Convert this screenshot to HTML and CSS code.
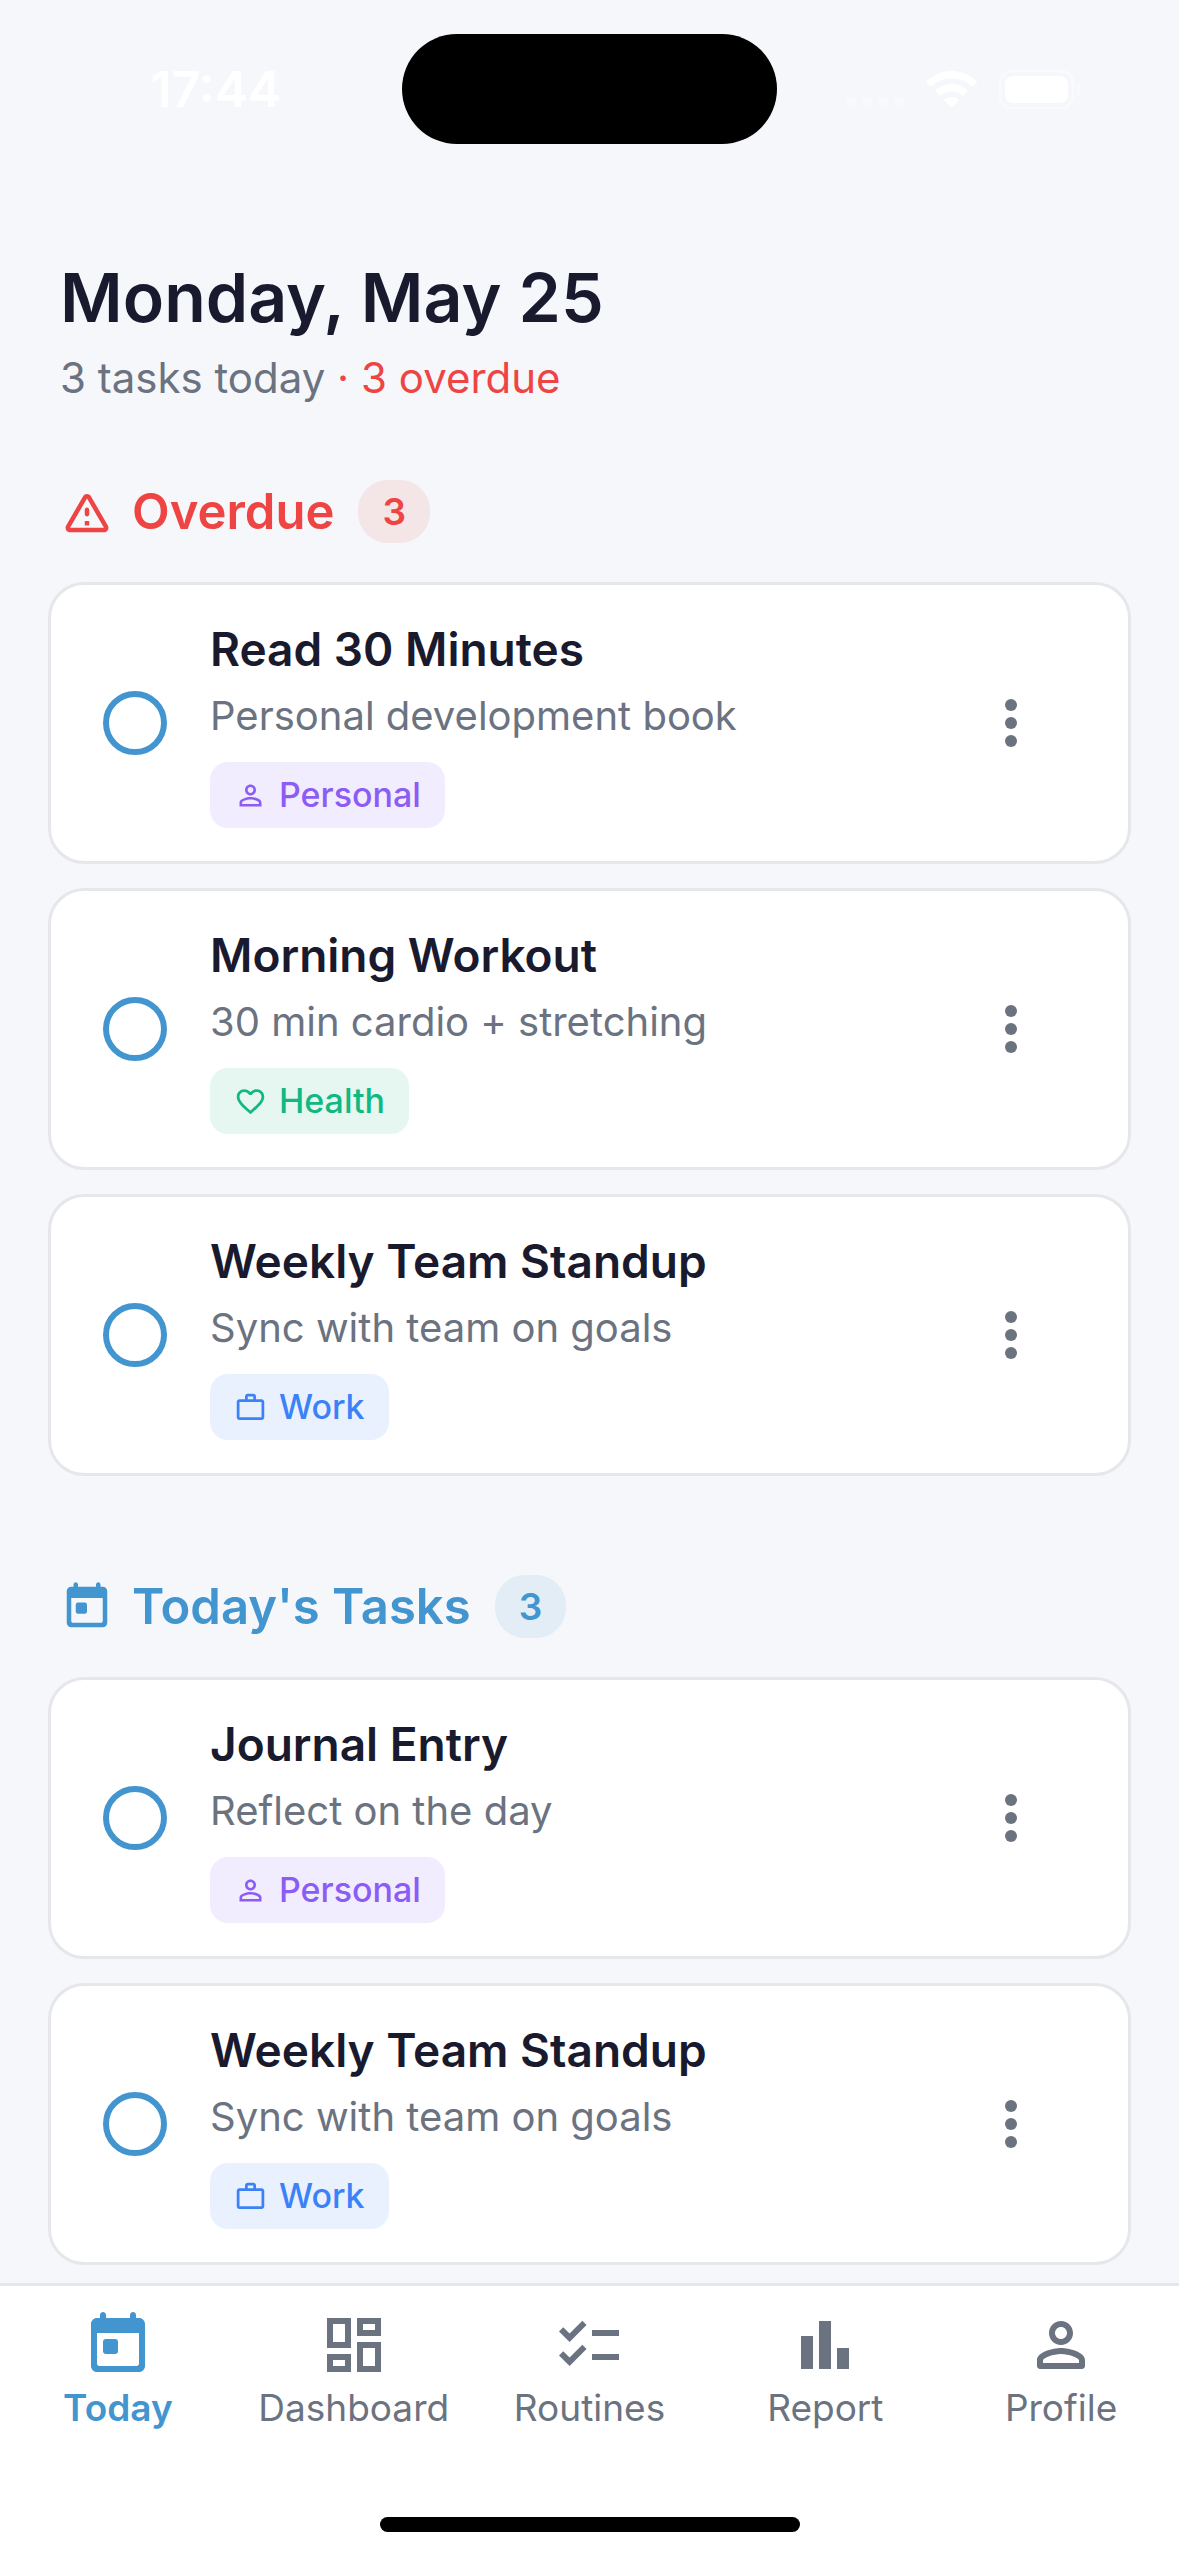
FILE: index.html
```
<!DOCTYPE html>
<html lang="en">
<head>
    <meta charset="UTF-8">
    <meta name="viewport" content="width=device-width, initial-scale=1.0">
    <title>Today</title>
    <link rel="stylesheet" href="styles.css">
</head>
<body>
    <!-- Shared icons -->
    <svg class="sprite" aria-hidden="true">
        <symbol id="icon-today" viewBox="0 0 24 24">
            <path fill-rule="evenodd" d="M19 3h-1V2c0-.55-.45-1-1-1s-1 .45-1 1v1H8V2c0-.55-.45-1-1-1s-1 .45-1 1v1H5c-1.110 0-2 .9-2 2v14c0 1.100.890 2 2 2h14c1.100 0 2-.9 2-2V5c0-1.100-.9-2-2-2zM5 8h14v10.200c0 .440-.360.800-.800.800H5.800c-.440 0-.800-.360-.800-.800V8z"/>
            <rect x="7" y="10" width="5" height="5" rx="1"/>
        </symbol>
        <symbol id="icon-warning" viewBox="0 0 24 24">
            <path d="M12 5.990L19.530 19H4.470L12 5.990M2.740 18c-.77 1.330.19 3 1.730 3h15.060c1.540 0 2.500-1.670 1.730-3L13.730 4.990c-.77-1.330-2.690-1.330-3.460 0L2.740 18zM11 11v2c0 .550.450 1 1 1s1-.450 1-1v-2c0-.550-.450-1-1-1s-1 .450-1 1zm0 5h2v2h-2z"/>
        </symbol>
        <symbol id="icon-person" viewBox="0 0 24 24">
            <path d="M12 5.900c1.160 0 2.100.940 2.100 2.100s-.940 2.100-2.100 2.100S9.900 9.160 9.900 8s.940-2.100 2.100-2.100m0 9c2.970 0 6.100 1.460 6.100 2.100v1.100H5.900V17c0-.640 3.130-2.100 6.100-2.100M12 4C9.790 4 8 5.790 8 8s1.790 4 4 4 4-1.790 4-4-1.790-4-4-4zm0 9c-2.670 0-8 1.340-8 4v3h16v-3c0-2.660-5.330-4-8-4z"/>
        </symbol>
        <symbol id="icon-heart" viewBox="0 0 24 24">
            <path d="M16.500 3c-1.740 0-3.410.810-4.500 2.090C10.910 3.810 9.240 3 7.500 3 4.420 3 2 5.420 2 8.500c0 3.780 3.400 6.860 8.550 11.540L12 21.350l1.450-1.320C18.600 15.360 22 12.280 22 8.500 22 5.420 19.580 3 16.500 3zm-4.400 15.550l-.1.100-.1-.1C7.140 14.240 4 11.390 4 8.500 4 6.500 5.500 5 7.500 5c1.540 0 3.040.990 3.570 2.360h1.870C13.460 5.990 14.960 5 16.500 5c2 0 3.500 1.500 3.500 3.500 0 2.890-3.140 5.740-7.900 10.050z"/>
        </symbol>
        <symbol id="icon-work" viewBox="0 0 24 24">
            <path fill-rule="evenodd" d="M14 6V4h-4v2h4zM4 8v11h16V8H4zm16-2c1.110 0 2 .890 2 2v11c0 1.110-.890 2-2 2H4c-1.110 0-2-.890-2-2V8c0-1.110.890-2 2-2h4V4c0-1.110.890-2 2-2h4c1.110 0 2 .890 2 2v2h4z"/>
        </symbol>
        <symbol id="icon-more" viewBox="0 0 24 24">
            <circle cx="12" cy="6" r="2"/>
            <circle cx="12" cy="12" r="2"/>
            <circle cx="12" cy="18" r="2"/>
        </symbol>
    </svg>

    <div class="status-bar">
        <div class="status-time">17:44</div>
        <div class="island"></div>
        <div class="status-icons">
            <svg class="signal" viewBox="0 0 58 37">
                <rect x="0" y="27" width="10" height="10" rx="3"/>
                <rect x="16" y="27" width="10" height="10" rx="3"/>
                <rect x="32" y="27" width="10" height="10" rx="3"/>
                <rect x="48" y="27" width="10" height="10" rx="3"/>
            </svg>
            <svg class="wifi" viewBox="0 0 51 37">
                <path d="M25.500 0C16 0 7 4 0 10.500Q0 12 5 15.500C10.500 10.500 17.500 7.500 25.500 7.500S40.500 10.500 46 15.500Q51 12 51 10.500C44 4 35 0 25.500 0z"/>
                <path d="M25.500 13C19 13 13.500 15.500 9 19.500L13.500 25C17 22 21 20.500 25.500 20.500S34 22 37.500 25L42 19.500C37.500 15.500 32 13 25.500 13z"/>
                <path d="M25.500 26c-3 0-6 1-8 3l8 8 8-8c-2-2-5-3-8-3z"/>
            </svg>
            <svg class="battery" viewBox="0 0 82 39">
                <rect class="battery-case" x="1" y="1" width="73" height="37" rx="12"/>
                <rect x="6" y="6" width="63" height="27" rx="8"/>
                <path class="battery-tip" d="M78 13c5 3 5 10 0 13z"/>
            </svg>
        </div>
    </div>

    <main class="content">
        <header class="page-header">
            <h1>Monday, May 25</h1>
            <p>3 tasks today <span class="overdue-count">· 3 overdue</span></p>
        </header>

        <section class="task-section">
            <div class="section-header overdue">
                <svg class="section-icon"><use href="#icon-warning"/></svg>
                <h2>Overdue</h2>
                <span class="badge">3</span>
            </div>
            <div class="task-list">
                <div class="task-card">
                    <input type="checkbox" class="task-check" id="task1">
                    <div class="task-body">
                        <label class="task-title" for="task1">Read 30 Minutes</label>
                        <p class="task-desc">Personal development book</p>
                        <span class="tag personal"><svg><use href="#icon-person"/></svg>Personal</span>
                    </div>
                    <button class="more" aria-label="More"><svg><use href="#icon-more"/></svg></button>
                </div>
                <div class="task-card">
                    <input type="checkbox" class="task-check" id="task2">
                    <div class="task-body">
                        <label class="task-title" for="task2">Morning Workout</label>
                        <p class="task-desc">30 min cardio + stretching</p>
                        <span class="tag health"><svg><use href="#icon-heart"/></svg>Health</span>
                    </div>
                    <button class="more" aria-label="More"><svg><use href="#icon-more"/></svg></button>
                </div>
                <div class="task-card">
                    <input type="checkbox" class="task-check" id="task3">
                    <div class="task-body">
                        <label class="task-title" for="task3">Weekly Team Standup</label>
                        <p class="task-desc">Sync with team on goals</p>
                        <span class="tag work"><svg><use href="#icon-work"/></svg>Work</span>
                    </div>
                    <button class="more" aria-label="More"><svg><use href="#icon-more"/></svg></button>
                </div>
            </div>
        </section>

        <section class="task-section">
            <div class="section-header today">
                <svg class="section-icon"><use href="#icon-today"/></svg>
                <h2>Today's Tasks</h2>
                <span class="badge">3</span>
            </div>
            <div class="task-list">
                <div class="task-card">
                    <input type="checkbox" class="task-check" id="task4">
                    <div class="task-body">
                        <label class="task-title" for="task4">Journal Entry</label>
                        <p class="task-desc">Reflect on the day</p>
                        <span class="tag personal"><svg><use href="#icon-person"/></svg>Personal</span>
                    </div>
                    <button class="more" aria-label="More"><svg><use href="#icon-more"/></svg></button>
                </div>
                <div class="task-card">
                    <input type="checkbox" class="task-check" id="task5">
                    <div class="task-body">
                        <label class="task-title" for="task5">Weekly Team Standup</label>
                        <p class="task-desc">Sync with team on goals</p>
                        <span class="tag work"><svg><use href="#icon-work"/></svg>Work</span>
                    </div>
                    <button class="more" aria-label="More"><svg><use href="#icon-more"/></svg></button>
                </div>
            </div>
        </section>
    </main>

    <footer class="bottom-bar">
        <nav class="tabs">
            <a href="#today" class="tab active">
                <svg><use href="#icon-today"/></svg>
                <span>Today</span>
            </a>
            <a href="#dashboard" class="tab">
                <svg viewBox="0 0 24 24"><path fill-rule="evenodd" d="M3 3h8v10H3zM5 5v6h4V5zM13 3h8v6h-8zM15 5v2h4V5zM13 11h8v10h-8zM15 13v6h4v-6zM3 15h8v6H3zM5 17v2h4v-2z"/></svg>
                <span>Dashboard</span>
            </a>
            <a href="#routines" class="tab">
                <svg viewBox="0 0 24 24"><path d="M22 7h-9v2h9V7zm0 8h-9v2h9v-2zM5.540 11L2 7.460l1.410-1.410 2.120 2.120 4.240-4.240 1.410 1.410L5.540 11zm0 8L2 15.460l1.410-1.410 2.120 2.120 4.240-4.240 1.410 1.410L5.540 19z"/></svg>
                <span>Routines</span>
            </a>
            <a href="#report" class="tab">
                <svg viewBox="0 0 24 24"><path d="M4 9h4v11H4zM10 4h4v16h-4zM16 13h4v7h-4z"/></svg>
                <span>Report</span>
            </a>
            <a href="#profile" class="tab">
                <svg viewBox="0 0 24 24"><path fill-rule="evenodd" d="M12 4C9.790 4 8 5.790 8 8s1.790 4 4 4 4-1.790 4-4-1.790-4-4-4zm0 2c1.100 0 2 .900 2 2s-.900 2-2 2-2-.900-2-2 .900-2 2-2zm0 7c-2.670 0-8 1.340-8 4v2c0 .550.450 1 1 1h14c.550 0 1-.450 1-1v-2c0-2.660-5.330-4-8-4zm6 5H6v-.99c.2-.72 3.300-2.010 6-2.010s5.800 1.290 6 2v1z"/></svg>
                <span>Profile</span>
            </a>
        </nav>
        <div class="home-indicator"></div>
    </footer>
</body>
</html>
```

FILE: styles.css
```
* {
    margin: 0;
    padding: 0;
    box-sizing: border-box;
}

body {
    font-family: Inter, Roboto, sans-serif;
    background: #f5f7fb;
    color: #1a1a2e;
    min-height: 100vh;
    display: flex;
    flex-direction: column;
}

svg {
    display: block;
    flex-shrink: 0;
    fill: currentColor;
}

.sprite {
    position: absolute;
    width: 0;
    height: 0;
}

/* Status bar */
.status-bar {
    display: grid;
    grid-template-columns: 1fr 375px 1fr;
    align-items: center;
    padding-top: 34px;
    color: #fff;
}

.status-time {
    font-size: 50px;
    line-height: 60px;
    font-weight: 600;
    text-align: center;
    padding-left: 30px;
}

.island {
    height: 110px;
    border-radius: 55px;
    background: #000;
}

.status-icons {
    display: flex;
    align-items: center;
    justify-content: center;
    gap: 22px;
    padding-right: 30px;
}

.signal {
    width: 58px;
    height: 37px;
    opacity: 0.3;
}

.wifi {
    width: 51px;
    height: 37px;
}

.battery {
    width: 82px;
    height: 39px;
}

.battery-case {
    fill: none;
    stroke: #fff;
    stroke-width: 3;
    opacity: 0.4;
}

.battery-tip {
    opacity: 0.4;
}

/* Content */
.content {
    flex: 1;
    padding: 113px 48px 18px;
}

.page-header {
    padding: 0 12px;
    margin-bottom: 76px;
}

.page-header h1 {
    font-size: 68px;
    line-height: 80px;
    font-weight: 600;
    margin-bottom: 15px;
}

.page-header p {
    font-size: 42px;
    line-height: 52px;
    color: #6b7280;
}

.page-header .overdue-count {
    color: #ef4444;
}

.task-section + .task-section {
    margin-top: 99px;
}

.section-header {
    display: flex;
    align-items: center;
    padding: 0 12px;
    margin-bottom: 39px;
}

.section-header h2 {
    font-size: 49px;
    line-height: 60px;
    font-weight: 600;
    margin: 0 24px 0 18px;
}

.section-icon {
    width: 54px;
    height: 54px;
}

.badge {
    padding: 0 24px;
    border-radius: 30px;
    font-size: 37px;
    line-height: 63px;
    font-weight: 600;
}

.overdue {
    color: #ef4444;
}

.overdue .badge {
    background: #f4e5e7;
}

.today {
    color: #4295cf;
}

.today .badge {
    background: #e2edf6;
}

.task-list {
    display: flex;
    flex-direction: column;
    gap: 24px;
}

.task-card {
    display: flex;
    align-items: center;
    background: #fff;
    border: 3px solid #e5e7eb;
    border-radius: 36px;
    padding: 33px 45px 33px 52px;
}

.task-check {
    appearance: none;
    width: 64px;
    height: 64px;
    border: 6px solid #4295cf;
    border-radius: 50%;
    margin-right: 43px;
}

.task-check:checked {
    background: #4295cf;
}

.task-body {
    flex: 1;
    display: flex;
    flex-direction: column;
    align-items: flex-start;
}

.task-title {
    font-size: 46px;
    line-height: 63px;
    font-weight: 600;
    margin-bottom: 9px;
}

.task-desc {
    font-size: 40px;
    line-height: 51px;
    color: #6b7280;
    margin-bottom: 21px;
}

.tag {
    display: flex;
    align-items: center;
    gap: 12px;
    padding: 0 24px;
    border-radius: 18px;
    font-size: 34px;
    line-height: 66px;
    font-weight: 500;
}

.tag svg {
    width: 33px;
    height: 33px;
}

.tag.personal {
    background: #f2edfe;
    color: #8b5cf6;
}

.tag.health {
    background: #e6f7f1;
    color: #10b981;
}

.tag.work {
    background: #eaf1fe;
    color: #3b82f6;
}

.more {
    display: flex;
    align-items: center;
    justify-content: center;
    width: 144px;
    height: 144px;
    border: none;
    background: none;
    color: #6b7280;
    cursor: pointer;
}

.more svg {
    width: 72px;
    height: 72px;
}

/* Bottom navigation */
.bottom-bar {
    background: #fff;
    border-top: 3px solid #e5e7eb;
    padding: 23px 0 24px;
}

.tabs {
    display: grid;
    grid-template-columns: repeat(5, 1fr);
    margin-bottom: 85px;
}

.tab {
    display: flex;
    flex-direction: column;
    align-items: center;
    gap: 3px;
    color: #6b7280;
    font-size: 37px;
    line-height: 48px;
    text-decoration: none;
}

.tab svg {
    width: 72px;
    height: 72px;
}

.tab.active {
    color: #4295cf;
    font-weight: 600;
}

.home-indicator {
    width: 420px;
    height: 15px;
    margin: 0 auto;
    border-radius: 8px;
    background: #000;
}
```
